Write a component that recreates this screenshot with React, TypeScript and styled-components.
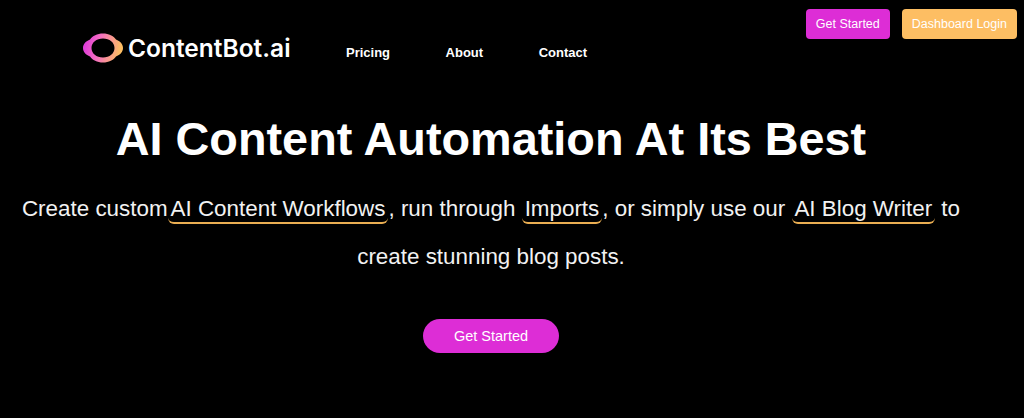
import React from 'react';
import styled, { createGlobalStyle } from 'styled-components';

const GlobalStyle = createGlobalStyle`
  html, body {
    margin: 0;
    padding: 0;
    background: #000;
    overflow: hidden;
  }
  body {
    font-family: "Liberation Sans", Arial, sans-serif;
    color: #fff;
  }
`;

const Page = styled.div`
  width: 1024px;
  height: 418px;
  background: #000;
`;

const Header = styled.header`
  display: flex;
  align-items: flex-start;
  height: 111px;
`;

const Brand = styled.a`
  display: flex;
  align-items: center;
  gap: 4px;
  margin: 31px 0 0 82px;
  width: 264px;
  height: 34px;
`;

const BrandName = styled.span`
  font-family: Inter, "Liberation Sans", sans-serif;
  font-size: 24.5px;
  font-weight: 600;
  color: #fff;
`;

const Nav = styled.ul`
  display: flex;
  gap: 55.5px;
  list-style: none;
  margin: 45px 0 0;
  padding: 0;
  flex: 1;
`;

const NavItem = styled.li`
  font-size: 13px;
  line-height: 15px;
  font-weight: 700;
  color: #fff;
`;

const Actions = styled.div`
  display: flex;
  gap: 12px;
  margin: 9px 7px 0 0;
`;

const HeaderButton = styled.button<{ $tone: 'pink' | 'orange' }>`
  height: 30px;
  padding: 0 10px;
  border: 0;
  border-radius: 4px;
  background: ${p => (p.$tone === 'pink' ? '#dd2dd6' : '#fdbe63')};
  color: #fff;
  font-family: inherit;
  font-size: 12.5px;
`;

const Hero = styled.section`
  width: 982px;
  text-align: center;
`;

const Title = styled.h1`
  margin: 0;
  font-size: 46.8px;
  line-height: 56px;
  font-weight: 700;
  color: #fff;
`;

const Lead = styled.p`
  margin: 18px 0 0;
  font-size: 22.4px;
  line-height: 48px;
  color: #f2f2f2;
`;

const Highlight = styled.span`
  display: inline-block;
  line-height: 27px;
  margin: 0 0.5px;
  padding: 0 2.5px;
  border-bottom: 2px solid #eaae52;
  border-radius: 0 0 6px 6px;
`;

const Cta = styled.button`
  display: block;
  width: 136px;
  height: 34px;
  margin: 38px auto 0;
  border: 0;
  border-radius: 17px;
  background: #dd2dd6;
  color: #fff;
  font-family: inherit;
  font-size: 14.5px;
`;

const Logo = () => (
  <svg width="42" height="30" viewBox="0 0 42 30" fill="none">
    <defs>
      <linearGradient id="logoGrad" x1="0" y1="0" x2="1" y2="0.15">
        <stop offset="0" stopColor="#d92fe0" />
        <stop offset="0.45" stopColor="#f56fc0" />
        <stop offset="1" stopColor="#fdbe63" />
      </linearGradient>
    </defs>
    <path
      fillRule="evenodd"
      d="M21 0.5c5.800 0 10.600 2.400 13 6C38 8 41 11 41 15s-3 7-7 8.500c-2.400 3.600-7.200 6-13 6s-10.600-2.400-13-6C4 22 1 19 1 15s3-7 7-8.500C10.400 2.900 15.200 0.500 21 0.500zM21 5.500c-6.600 0-11.500 4-11.500 9.500s4.900 9.500 11.500 9.500 11.500-4 11.500-9.500-4.900-9.500-11.500-9.500z"
      fill="url(#logoGrad)"
    />
  </svg>
);

const App = () => (
  <Page>
    <GlobalStyle />
    <Header>
      <Brand>
        <Logo />
        <BrandName>ContentBot.ai</BrandName>
      </Brand>
      <Nav>
        <NavItem>Pricing</NavItem>
        <NavItem>About</NavItem>
        <NavItem>Contact</NavItem>
      </Nav>
      <Actions>
        <HeaderButton $tone="pink">Get Started</HeaderButton>
        <HeaderButton $tone="orange">Dashboard Login</HeaderButton>
      </Actions>
    </Header>
    <Hero>
      <Title>AI Content Automation At Its Best</Title>
      <Lead>
        Create custom<Highlight>AI Content Workflows</Highlight>, run through <Highlight>Imports</Highlight>, or simply use our <Highlight>AI Blog Writer</Highlight> to
        <br />
        create stunning blog posts.
      </Lead>
      <Cta>Get Started</Cta>
    </Hero>
  </Page>
);

export default App;
